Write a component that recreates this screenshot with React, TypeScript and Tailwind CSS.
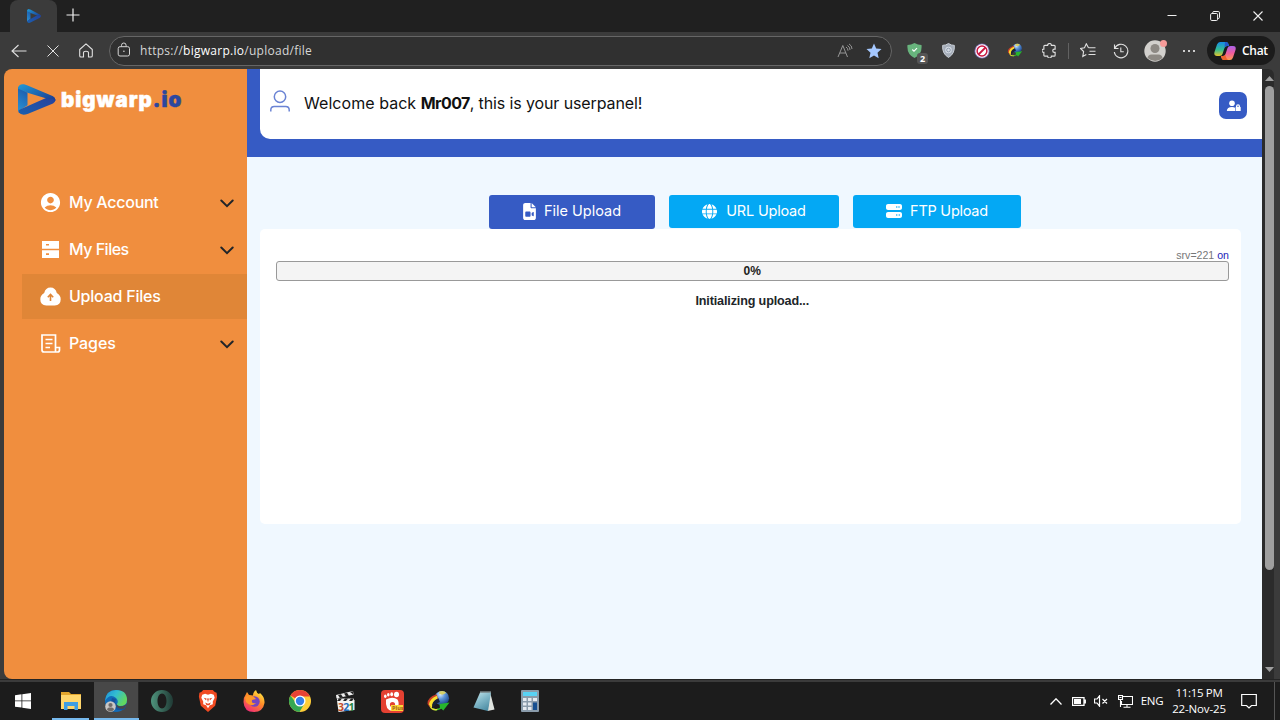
import type { ReactNode } from "react";
import { MdAccountCircle } from "react-icons/md";
import { FaFileVideo, FaGlobe, FaServer } from "react-icons/fa6";

function BrandMark({ className }: { className: string }) {
  return (
    <svg viewBox="0 0 38 32" preserveAspectRatio="none" className={className}>
      <defs>
        <linearGradient id="brandTop" x1="0" y1="0" x2="1" y2="0.7">
          <stop offset="0" stopColor="#1f9bd8" />
          <stop offset="1" stopColor="#1d4396" />
        </linearGradient>
        <linearGradient id="brandSide" x1="0" y1="1" x2="0.3" y2="0">
          <stop offset="0" stopColor="#2a93d4" />
          <stop offset="1" stopColor="#1c5fb0" />
        </linearGradient>
        <linearGradient id="brandBase" x1="0" y1="1" x2="1" y2="0">
          <stop offset="0" stopColor="#1a5fae" />
          <stop offset="1" stopColor="#26419c" />
        </linearGradient>
      </defs>
      <path d="M0 3 9.500 9v13L0 28.500z" fill="url(#brandSide)" />
      <path d="M.8 29.500Q-.3 27.500 2 26.300L28 14.500l7-1.500q5 3.500 0 7L9.500 31Q3.500 33 .8 29.500z" fill="url(#brandBase)" />
      <path d="M0 4Q1-.5 6 .3L9 1.200 34.500 12.300q4 2.500 2.500 5.500-2-3.500-6-2L9.500 9 .3 5z" fill="url(#brandTop)" />
    </svg>
  );
}

function IdmGlobe({ className }: { className: string }) {
  return (
    <svg viewBox="0 0 24 24" className={className}>
      <defs>
        <radialGradient id="globeBlue" cx="0.4" cy="0.25" r="0.8">
          <stop offset="0" stopColor="#d5e8fa" />
          <stop offset="0.4" stopColor="#5b93d6" />
          <stop offset="1" stopColor="#123a7e" />
        </radialGradient>
      </defs>
      <circle cx="15.500" cy="8.500" r="7.500" fill="url(#globeBlue)" />
      <path d="M13 1.500q5-1.500 7 1.500l-4 2-3.500-1z" fill="#d6d067" />
      <path d="M10 4.500Q0 8 .5 14.500L4.500 20q-.5-8 7-11z" fill="#cc4028" />
      <path d="M10.500 6Q3 9 2 15l3 4.500q0-7 6-10z" fill="#f9e02d" />
      <path d="M12 8.500q-6 2-6.500 7l1 4q1-5 7-7z" fill="#17233a" />
      <path d="M2.500 17q4.500 5 11 1.500l-.5-4 10.500-1.500-6.500 8.500-2-2Q7 24 2.500 17z" fill="#27b52c" />
      <path d="M2.500 17q4 4 9 2.500l-1.500 1.800Q5 22 2.500 17z" fill="#e1df38" />
    </svg>
  );
}

const line = "fill-none stroke-current";

function Cell({ className, children }: { className: string; children?: ReactNode }) {
  return <div className={`flex h-full shrink-0 items-center justify-center ${className}`}>{children}</div>;
}

function TabStrip() {
  return (
    <div className="flex h-8 shrink-0 items-stretch bg-[#202020] text-[#f0f0f0]">
      <div className="ml-[10px] flex w-[47px] items-center justify-center rounded-t-lg bg-[#3b3b3b]">
        <BrandMark className="mt-[-1px] h-[14px] w-[14px]" />
      </div>
      <Cell className="w-[32px]">
        <svg viewBox="0 0 14 14" className={`mb-[3px] h-[14px] w-[14px] ${line}`}>
          <path d="M7 .5v13M.5 7h13" strokeWidth="1.200" />
        </svg>
      </Cell>
      <div className="flex-1" />
      <Cell className="w-[43px]">
        <svg viewBox="0 0 10 10" className={`h-[10px] w-[10px] ${line}`}><path d="M.5 4.500h9" /></svg>
      </Cell>
      <Cell className="w-[43px]">
        <svg viewBox="0 0 10 10" className={`h-[10px] w-[10px] ${line}`}>
          <rect x=".6" y="2.500" width="7" height="7" rx="1.200" />
          <path d="M2.700 2.500V1.700q0-1.200 1.200-1.200h4.300q1.300 0 1.300 1.300v4.500q0 1.200-1.300 1.200h-.6" />
        </svg>
      </Cell>
      <Cell className="w-[43px]">
        <svg viewBox="0 0 10 10" className={`h-[10px] w-[10px] ${line}`}><path d="m.5.5 9 9m0-9-9 9" strokeWidth="1.100" /></svg>
      </Cell>
      <div className="w-px" />
    </div>
  );
}

function AddressBar() {
  return (
    <div className="flex h-[30px] w-[783px] shrink-0 items-center rounded-full border border-[#666] bg-[#303030] text-[#d6d6d6]">
      <svg viewBox="0 0 14 16" className={`mb-[2px] ml-[7px] h-4 w-[14px] ${line}`}>
        <rect x="1.200" y="4.700" width="11.300" height="9.300" rx="1.800" />
        <path d="M4.500 4.500V3.300q0-2.300 2.300-2.300t2.300 2.300v1.200" />
        <circle cx="6.900" cy="9.300" r=".8" className="fill-current stroke-none" />
      </svg>
      <div className="ml-[9px] pt-px text-[12px] leading-4 tracking-[0.27px] whitespace-nowrap">
        https://<span className="text-white">bigwarp.io</span>/upload/file
      </div>
      <div className="flex-1" />
      <svg viewBox="0 0 16 16" className={`mr-[13px] h-4 w-4 text-[#9b9b9b] ${line}`}>
        <path d="M1 14 5.800 2.500 10.500 14M2.800 10h6M9 4q2 1 2 3.700M10.500 2.500q2.500 1.300 2.500 4.500M12 .9q3 1.700 3 5.100" strokeWidth=".95" />
      </svg>
      <svg viewBox="0 0 16 16" className="mr-[9px] h-4 w-4 fill-[#a5c8ff]">
        <path d="m8 .5 2.200 5 5.300.6-4 3.600 1.200 5.500L8 12.400l-4.700 2.800 1.200-5.500-4-3.600 5.300-.6z" />
      </svg>
    </div>
  );
}

function Toolbar() {
  return (
    <div className="flex h-[37px] shrink-0 items-center bg-[#3b3b3b] text-[#e0e0e0]">
      <Cell className="w-9 pl-px">
        <svg viewBox="0 0 16 14" className={`h-[14px] w-4 ${line}`}><path d="M15.500 7H1M7.500 1 1 7l6.500 6" strokeWidth="1.100" /></svg>
      </Cell>
      <Cell className="w-[33px]">
        <svg viewBox="0 0 12 12" className={`h-3 w-3 ${line}`}><path d="m.5.5 11 11m0-11-11 11" /></svg>
      </Cell>
      <Cell className="w-[35px] pr-px">
        <svg viewBox="0 0 14 15" className={`h-[15px] w-[14px] ${line}`}>
          <path d="M.7 6.500 7 .8l6.300 5.700v6.200q0 1.300-1.300 1.300H9.500V9.800Q9.500 8.300 7 8.300T4.500 9.800V14H2Q.7 14 .7 12.700z" strokeWidth="1.100" strokeLinejoin="round" />
        </svg>
      </Cell>
      <div className="w-[5px] shrink-0" />
      <AddressBar />
      <Cell className="relative ml-[6px] w-[34px]">
        <svg viewBox="0 0 15 15" className="mr-0.5 h-[15px] w-[15px]">
          <path d="M7.500 0q3.500 2 7 2 1 9-7 13Q-.5 11 .5 2q3.500 0 7-2z" fill="#68b47d" />
          <path d="m5.300 6.500 1.700 1.700L10 5.200" fill="none" stroke="#fff" strokeWidth="1.200" />
        </svg>
        <span className="absolute top-[21px] left-[19px] flex h-[11px] w-[11px] items-center justify-center rounded-[3px] bg-[#555] text-[9px] font-bold text-white">2</span>
      </Cell>
      <Cell className="w-[33px]">
        <svg viewBox="0 0 14 16" className="h-[15px] w-[13px]">
          <path d="M7 .5q3 2 6.300 2 .7 9-6.300 13-7-4-6.300-13Q4 2.500 7 .5z" fill="#a5adb9" stroke="#d0d6de" />
          <circle cx="7" cy="7.500" r="3.500" fill="#d5dbe4" />
          <circle cx="7" cy="7.500" r="2" fill="none" stroke="#7d8b9e" strokeWidth=".8" />
        </svg>
      </Cell>
      <Cell className="w-[33px]">
        <svg viewBox="0 0 16 16" className="h-4 w-4">
          <circle cx="8" cy="8" r="7.600" fill="#7a69ae" />
          <circle cx="8" cy="8" r="6.700" fill="#fff" />
          <circle cx="8" cy="8" r="4.900" fill="none" stroke="#c91743" strokeWidth="1.500" />
          <path d="m4.500 11.500 7-7" stroke="#c91743" strokeWidth="1.800" />
        </svg>
      </Cell>
      <Cell className="w-[34px]"><IdmGlobe className="h-[15px] w-4" /></Cell>
      <Cell className="w-[34px]">
        <svg viewBox="0 0 16 16" className={`h-[15px] w-[15px] ${line}`}>
          <path d="M3 2.500h3a2 2 0 0 1 4 0h3q1 0 1 1V6.500h-.8a1.700 1.700 0 0 0 0 3.500h.8v3q0 1-1 1H10a2 2 0 0 1-4 0H3q-1 0-1-1v-3h-.3a1.700 1.700 0 0 1 0-3.500H2v-3q0-1 1-1z" strokeWidth="1.200" />
        </svg>
      </Cell>
      <div className="ml-[2px] h-4 w-px bg-[#626262]" />
      <Cell className="w-[38px]">
        <svg viewBox="0 0 16 15" className={`h-[15px] w-4 ${line}`}>
          <path d="M8.500 4.800 6.300.8 4.500 4.800.6 5.500l3 3-.8 4.900 3.500-2M8.500 4.800H15.500M9.500 8.200h6M8.500 11.500h7" strokeWidth="1.100" />
        </svg>
      </Cell>
      <Cell className="w-7">
        <svg viewBox="0 0 16 16" className={`h-4 w-4 ${line}`}>
          <path d="M1.500 1.500V5.500h4M1.800 5.300A6.800 6.800 0 1 1 1.300 9M7.800 4.500v4.300h3" strokeWidth="1.100" />
        </svg>
      </Cell>
      <Cell className="relative w-10">
        <svg viewBox="0 0 22 22" className="h-[22px] w-[22px]">
          <circle cx="11" cy="11" r="10.700" fill="#d2d0cd" />
          <circle cx="11" cy="8.500" r="4.500" fill="#8d8984" />
          <path d="M3.500 18q.5-3.500 4-3.500h7q3.500 0 4 3.500-7 6-15 0z" fill="#8d8984" />
        </svg>
        <span className="absolute top-[8px] left-[25px] h-[7px] w-[7px] rounded-full bg-[#f69b99]" />
      </Cell>
      <Cell className="w-[27px] gap-[3px]">
        <span className="h-0.5 w-0.5 rounded-full bg-white" />
        <span className="h-0.5 w-0.5 rounded-full bg-white" />
        <span className="h-0.5 w-0.5 rounded-full bg-white" />
      </Cell>
      <div className="ml-[5px] flex h-[29px] w-[68px] shrink-0 items-center rounded-full bg-[#1b1b1b] pl-[7px] text-[12px] font-semibold tracking-[-0.3px] text-white">
        <svg viewBox="0 0 22 20" className="mr-[6px] h-5 w-[22px] shrink-0">
          <defs>
            <linearGradient id="pilotLeft" x1="0" y1="0" x2="0" y2="1">
              <stop offset="0" stopColor="#168ce8" /><stop offset=".55" stopColor="#32bd91" /><stop offset="1" stopColor="#e5c42c" />
            </linearGradient>
            <linearGradient id="pilotRight" x1="0" y1="0" x2="0" y2="1">
              <stop offset="0" stopColor="#aa62ea" /><stop offset=".5" stopColor="#ef5c9f" /><stop offset="1" stopColor="#ff9a51" />
            </linearGradient>
          </defs>
          <path d="M6 1h6q2 0 2.500 2l.5 2h-2q-2 0-2.700 2.500L8.500 13Q8 15 5.500 15H3q-3.500 0-2.500-4L3 3.500Q4 1 6 1z" fill="url(#pilotLeft)" />
          <path d="M16 19h-6q-2 0-2.500-2L7 15h2q2 0 2.700-2.500L13.500 7Q14 5 16.500 5H19q3.500 0 2.500 4L19 16.500Q18 19 16 19z" fill="url(#pilotRight)" />
          <path d="M11 1q3 0 3.500 2l.5 2h-2q-1.700 0-2.500 2z" fill="#2458ce" />
          <path d="M7 15h2q1.500 0 2.200-1.500l.8 2.500q.5 2 2 3h-4q-2 0-2.500-2z" fill="#ef632e" />
        </svg>
        Chat
      </div>
    </div>
  );
}

function FilesIcon() {
  return (
    <svg viewBox="0 0 17 17" className="h-[17px] w-[17px]">
      <path fillRule="evenodd" fill="#fff" d="M0 0h17v7.700H0zM4 3v1.600h3V3zM0 9.300h17V17H0zm4 3v1.600h3v-1.600z" />
    </svg>
  );
}

function UploadIcon() {
  return (
    <svg viewBox="0 0 21 19" className="h-[19px] w-[21px] shrink-0">
      <path d="M10.500.5Q15.500.5 16.800 6q3.900 2.200 3.900 6.300 0 6-6 6.200H6.300Q.3 18.300.3 12.300.3 8.200 4.200 6 5.500.5 10.500.5z" fill="#fff" />
      <path d="M10.500 14V8M7.800 10.200l2.700-2.700 2.700 2.700" fill="none" stroke="#e08637" strokeWidth="1.600" />
    </svg>
  );
}

function PagesIcon() {
  return (
    <svg viewBox="0 0 20 20" className="h-5 w-5 fill-none stroke-white">
      <path d="M1.500 1H14.500V18H3Q1 18 1 16V1zM14.500 13.500H18.500V16q0 2-2 2h-2M4.500 5.500H11.500M4.500 9.500H11.500M4.500 13.500H9" strokeWidth="1.700" />
    </svg>
  );
}

interface NavProps { icon: ReactNode; label: string; tracking: string; active?: boolean }

function NavItem({ icon, label, tracking, active }: NavProps) {
  return (
    <div className={`flex h-[45px] items-center pl-[18px] font-medium text-white ${active ? "bg-[#e08637]" : ""}`}>
      <span className="flex w-[21px] justify-center">{icon}</span>
      <span className={`ml-2 flex-1 pb-px text-[16px] leading-6 whitespace-nowrap ${tracking}`}>{label}</span>
      {!active && (
        <svg viewBox="0 0 14 9" className="mt-px mr-[13px] h-[9px] w-[14px] fill-none stroke-[#212529]">
          <path d="m1.300 1.500 5.700 5.600 5.700-5.600" strokeWidth="2" strokeLinecap="round" />
        </svg>
      )}
    </div>
  );
}

function Sidebar() {
  return (
    <aside className="flex w-[243px] shrink-0 flex-col bg-[#f08e3e] font-['Inter',sans-serif]">
      <div className="flex h-[111px] items-start pt-[15px] pl-[14px]">
        <BrandMark className="h-[31px] w-[38px]" />
        <div className="ml-[5px] pt-[4px] text-[20.500px] leading-6 font-black tracking-[1px] text-white [-webkit-text-stroke:0.5px_currentColor]">
          bigwarp<span className="text-[#2c479f]">.io</span>
        </div>
      </div>
      <nav className="flex flex-col gap-[2px] pl-[18px]">
        <NavItem icon={<MdAccountCircle className="h-[23px] w-[23px] shrink-0" />} label="My Account" tracking="tracking-[-0.27px]" />
        <NavItem icon={<FilesIcon />} label="My Files" tracking="tracking-[-0.5px]" />
        <NavItem icon={<UploadIcon />} label="Upload Files" tracking="tracking-[-0.23px]" active />
        <NavItem icon={<PagesIcon />} label="Pages" tracking="tracking-[-0.1px]" />
      </nav>
    </aside>
  );
}

function MainPanel() {
  return (
    <main className="flex w-[1015px] shrink-0 flex-col bg-[#f0f8ff] font-['Inter',sans-serif]">
      <header className="h-[87.500px] shrink-0 bg-[#365bc4] pl-[13px]">
        <div className="flex h-[70px] items-center rounded-bl-[10px] bg-white pl-[10px]">
          <svg viewBox="0 0 20 22" className="mb-[6px] h-[22px] w-5 fill-none stroke-[#6a83d4]">
            <circle cx="10" cy="6.800" r="5.700" strokeWidth="1.500" />
            <path d="M.8 21.500v-1.500q0-3.500 3.500-3.500h11.400q3.500 0 3.500 3.500v1.500" strokeWidth="1.500" />
          </svg>
          <p className="ml-[14px] pb-[2px] text-[16px] leading-6 whitespace-nowrap text-[#111]">
            <span className="tracking-[0.05px]">Welcome back </span>
            <b className="font-bold tracking-[-0.6px]">Mr007</b>
            <span className="tracking-[-0.12px]">, this is your userpanel!</span>
          </p>
          <button className="mt-[3px] mr-[15px] ml-auto flex h-[27px] w-[28px] items-center justify-center rounded-[7px] bg-[#365bc4]">
            <svg viewBox="0 0 15 12" className="h-3 w-[15px]">
              <circle cx="6" cy="3.200" r="2.800" fill="#fff" />
              <path d="M.8 11Q1 7 6 7q2 0 3 .7V11zM10 6.800v-.5q0-2 2-2t2 2v.5q.7 0 .7.700V11H9.600V7.500q0-.7.4-.7zm1.200 0h1.600v-.5q0-.8-.8-.8t-.8.8z" fill="#fff" />
            </svg>
          </button>
        </div>
      </header>
      <div className="mt-[38px] flex h-[34.500px] shrink-0 items-start pl-[242px] text-[14.500px] text-white">
        <button className="flex h-[34px] w-[166px] items-center justify-center rounded-[3px] bg-[#365bc4] pb-0.5 whitespace-nowrap">
          <FaFileVideo className="mt-[2px] mr-2 h-[17px] w-[13px]" />
          File Upload
        </button>
        <button className="ml-[14px] flex h-[33px] w-[170px] items-center justify-center rounded-[3px] bg-[#04a8f4] pb-px tracking-[-0.2px] whitespace-nowrap">
          <FaGlobe className="mt-px mr-[9px] h-[15px] w-[15px]" />
          URL Upload
        </button>
        <button className="ml-[14px] flex h-[33px] w-[168px] items-center justify-center rounded-[3px] bg-[#04a8f4] pb-px tracking-[-0.25px] whitespace-nowrap">
          <FaServer className="mt-px mr-2 h-[16px] w-[16px]" />
          FTP Upload
        </button>
      </div>
      <section className="ml-[12.500px] h-[295px] w-[981px] rounded-[5px] bg-white pt-[20px] pr-[11.500px] pl-4 font-['Liberation_Sans',sans-serif]">
        <p className="text-right text-[10.600px] leading-3 text-[#777]">
          srv=221 <span className="text-[#2323b8]">on</span>
        </p>
        <div className="flex h-5 items-center justify-center rounded-[3px] border border-[#999] bg-[#f4f4f4] text-[12px] font-bold text-[#222]">0%</div>
        <p className="pt-[12px] text-center text-[12.600px] leading-4 font-bold tracking-[-0.15px] text-[#212529]">Initializing upload...</p>
      </section>
    </main>
  );
}

function Scrollbar() {
  return (
    <div className="flex w-3 shrink-0 flex-col items-center rounded-tr-md bg-[#2b2b2b] pl-[2px]">
      <svg viewBox="0 0 9 5" className="mt-[7px] h-[5px] w-[9px] fill-[#9f9f9f]"><path d="M4.500 0 9 5H0z" /></svg>
      <div className="mt-[5px] h-[484px] w-[9px] rounded-full bg-[#9f9f9f]" />
      <div className="flex-1" />
      <svg viewBox="0 0 9 5" className="mb-[7px] h-[5px] w-[9px] fill-[#9f9f9f]"><path d="M4.500 5 0 0h9z" /></svg>
    </div>
  );
}

function TaskbarApps() {
  return (
    <>
      <Cell className="w-[45px]">
        <svg viewBox="0 0 16 16" className="h-4 w-4 fill-white"><path d="M0 2.200 6.500 1.300v6.200H0zM7.300 1.200 16 0v7.500H7.300zM0 8.300h6.500v6.300L0 13.700zM7.300 8.300H16V16l-8.700-1.200z" /></svg>
      </Cell>
      <Cell className="relative w-[49px] pl-[2px]">
        <svg viewBox="0 0 22 20" className="h-5 w-[22px]">
          <path d="M1 1h8l2 2h10v14H1z" fill="#e3a62d" /><path d="M1 4h20v14H1z" fill="#ffd66c" />
          <path d="M4 19V11h14v8h-3.500v-4h-7v4z" fill="#3e9de2" />
        </svg>
        <span className="absolute bottom-0 left-[7px] h-0.5 w-[37px] bg-[#76b9ed]" />
      </Cell>
      <Cell className="relative w-[45px] border-r border-[#262626] bg-[#484848]">
        <svg viewBox="0 0 24 24" className="h-6 w-6">
          <defs><linearGradient id="edgeTop" x1="0" y1="0" x2="1" y2=".5"><stop offset="0" stopColor="#1c8edb" /><stop offset=".5" stopColor="#33bed0" /><stop offset="1" stopColor="#62d95e" /></linearGradient></defs>
          <circle cx="12" cy="12" r="11" fill="#126bb8" />
          <path d="M1 12Q2 1 12 1q11 0 11 10 0 6-7 6-3 0-3-2 2-3-1-6Q6 4 1 12z" fill="url(#edgeTop)" />
          <path d="M8 9q-4 13 11 12 2-1 3-3-5 2-9-1-3-3-1-7z" fill="#15529b" />
          <path d="M13 14q-1 2 2 3 5 1 8-3-1 4-4 6-9-1-6-6z" fill="#484848" />
          <circle cx="6.500" cy="17.500" r="5.300" fill="#c9c7c5" /><circle cx="6.500" cy="16" r="2.100" fill="#706b69" /><path d="M3 21q0-2.500 2-2.500h3q2 0 2 2.500-3.500 2.500-7 0z" fill="#706b69" />
        </svg>
        <span className="absolute bottom-0 left-0 h-0.5 w-[45px] bg-[#76b9ed]" />
      </Cell>
      <Cell className="w-[46px]">
        <svg viewBox="0 0 22 22" className="h-[22px] w-[22px]">
          <defs><linearGradient id="operaRing"><stop offset="0" stopColor="#4f947d" /><stop offset="1" stopColor="#203a35" /></linearGradient></defs>
          <path fillRule="evenodd" fill="url(#operaRing)" d="M11 0a11 11 0 1 0 0 22 11 11 0 0 0 0-22zm0 3.500c2.500 0 4.500 3 4.500 7.500s-2 7.500-4.500 7.500S6.500 15.500 6.500 11 8.500 3.500 11 3.500z" />
        </svg>
      </Cell>
      <Cell className="w-[46px]">
        <svg viewBox="0 0 20 23" className="h-[22px] w-5">
          <path d="M5 0h10l2 2 2 1 .5 4-2 9.500L10 23l-7.500-6.500L.5 7 1 3l2-1z" fill="#f14a22" />
          <path d="m4 5 3-1 3 1 3-1 3 1 1 3-2 4v3l-3 1-2 3-2-3-3-1v-3L3 8z" fill="#fff" />
          <path d="m5.500 8 3 1-.5 2zM14.500 8l-3 1 .5 2zM9 9l1 4 1-4zM7 13l3 1.500 3-1.500-1.500 3h-3z" fill="#e84420" />
        </svg>
      </Cell>
      <Cell className="w-[46px]">
        <svg viewBox="0 0 22 22" className="h-[22px] w-[22px]">
          <defs><linearGradient id="foxFire" x1=".8" y1="0" x2=".2" y2="1"><stop offset="0" stopColor="#fff044" /><stop offset=".45" stopColor="#ff8a27" /><stop offset="1" stopColor="#f0267b" /></linearGradient></defs>
          <path d="m3 4 1-2 2 3 4 .5Q10 2 13 0q.5 3 3 4l1-1q5 4 4.500 10Q20 22 11 22 1 22 .5 12 .5 7 3 4z" fill="url(#foxFire)" />
          <circle cx="11.500" cy="11.500" r="5.200" fill="#7546bf" />
          <path d="M2 7q4-3 9 0l2 2-4 1q-1 4 4 3-5 5-10-1z" fill="#ff9728" />
        </svg>
      </Cell>
      <Cell className="w-[46px]">
        <svg viewBox="0 0 22 22" className="h-[22px] w-[22px]">
          <circle cx="11" cy="11" r="11" fill="#ffcd38" />
          <path d="M11 11 1.470 5.500A11 11 0 0 1 20.530 5.500L21 6.500H11z" fill="#e84335" />
          <path d="M1.470 5.500A11 11 0 0 0 10.500 22l5-8.500L7 13z" fill="#35a853" />
          <circle cx="11" cy="11" r="5.500" fill="#fff" /><circle cx="11" cy="11" r="4.200" fill="#357fe9" />
        </svg>
      </Cell>
      <Cell className="w-[46px]">
        <svg viewBox="0 0 22 22" className="h-[22px] w-[22px]">
          <path d="M2 10.500 19.500 10v10L3.500 22z" fill="#f5f5f2" />
          <path d="m1 5 17-4 .5 3.500-17 4zM2 8.500h17V11H2z" fill="#eee" />
          <path d="m3 5 3-.7 2 3-3 .7zm6-1.500 3-.7 2 3-3 .7zm6-1.500 3-.7v3zM4 8.500h3L5 11H2zm6 0h3L11 11H8zm6 0h3L17 11h-3z" fill="#222" />
          <text x="3" y="20.500" fontSize="10.500" fontWeight="bold" letterSpacing="-0.8" fontFamily="Open Sans, sans-serif"><tspan fill="#c34c28">3</tspan><tspan fill="#226ebb">2</tspan><tspan fill="#278442">1</tspan></text>
        </svg>
      </Cell>
      <Cell className="w-[46px]">
        <svg viewBox="0 0 23 23" className="h-[23px] w-[23px]">
          <rect width="23" height="23" rx="4" fill="#e44132" />
          <path fillRule="evenodd" d="M5 9.500q7-3.500 11.500 0 2 3 .5 8-2 3.500-6 3.500-7-1-6-11.500zm6.500 2.500a2.600 2.600 0 1 0 0 5.200 2.600 2.600 0 0 0 0-5.200z" fill="#fff" />
          <ellipse cx="4.300" cy="6.300" rx="1.300" ry="1.800" fill="#fff" /><ellipse cx="7.300" cy="4.800" rx="1.300" ry="1.800" fill="#fff" /><ellipse cx="10.700" cy="4.200" rx="1.400" ry="2" fill="#fff" /><ellipse cx="15.500" cy="4.500" rx="2.500" ry="2.800" fill="#fff" />
          <rect x="10" y="15" width="12" height="6" fill="#fbd736" />
          <text x="11" y="20" fontSize="5.500" fontWeight="bold" fill="#a66018" fontFamily="Open Sans, sans-serif">Plus</text>
        </svg>
      </Cell>
      <Cell className="w-[46px]"><IdmGlobe className="h-[23px] w-[23px]" /></Cell>
      <Cell className="w-[46px]">
        <svg viewBox="0 0 22 22" className="h-[22px] w-[22px]">
          <defs><linearGradient id="padPage" x1="0" y1="0" x2=".6" y2="1"><stop offset="0" stopColor="#c4e5eb" /><stop offset=".5" stopColor="#83b9c9" /><stop offset="1" stopColor="#4f8fa6" /></linearGradient></defs>
          <path d="m17 2 4.500 17.500-7 1.500z" fill="#dfe3df" />
          <path d="M7 2.500h11L15 21 .5 17.500z" fill="url(#padPage)" />
          <path d="M7.500 2h10.500" stroke="#a5b4b6" strokeDasharray="1 1" strokeWidth="2" />
        </svg>
      </Cell>
      <Cell className="w-[46px]">
        <svg viewBox="0 0 18 22" className="h-[22px] w-[18px]">
          <rect width="18" height="22" rx="1" fill="#8a9baa" /><rect x="2" y="2" width="14" height="4" fill="#58d2f5" />
          <path d="M2 8h3.500v3H2zm5 0h3.500v3H7zm5 0h4v3h-4zM2 12.500h3.500v3H2zm5 0h3.500v3H7zM2 17h3.500v3H2zm5 0h3.500v3H7z" fill="#e5eaf0" /><path d="M12 12.500h4V20h-4z" fill="#174f90" />
        </svg>
      </Cell>
    </>
  );
}

function Taskbar() {
  return (
    <footer className="flex h-[38px] shrink-0 bg-[#1c1c1c] text-white">
      <TaskbarApps />
      <div className="flex-1" />
      <Cell className="w-6"><svg viewBox="0 0 12 7" className={`h-[7px] w-3 ${line}`}><path d="m.5 6.500 5.500-5.700 5.500 5.700" strokeWidth="1.300" /></svg></Cell>
      <Cell className="w-[22px]">
        <svg viewBox="0 0 14 9" className={`h-[9px] w-[14px] ${line}`}><path d="M.5.5h11.500v8H.5zM13.300 2.500v4" strokeWidth="1.300" /><path d="M2 2h7v5H2z" className="fill-current stroke-none" /></svg>
      </Cell>
      <Cell className="w-[22px]">
        <svg viewBox="0 0 14 12" className={`h-3 w-[14px] ${line}`}><path d="M.5 4H3L5.500.8v10.400L3 8H.5zM8.500 4l4.500 4.500M13 4 8.500 8.500" strokeWidth="1.200" /></svg>
      </Cell>
      <Cell className="w-[26px]">
        <svg viewBox="0 0 15 13" className={`h-[13px] w-[15px] ${line}`}><path d="M5 1.500h9.500v8h-11V6M9 9.500V12M5.500 12.300h7M.5.500h4v4h-4zM2.500 4.500V12M1.500 2.500h2" strokeWidth="1.100" /></svg>
      </Cell>
      <Cell className="w-[28px] text-[11.500px] tracking-[-0.3px]">ENG</Cell>
      <Cell className="w-[66px] flex-col text-[11.500px] leading-[16.500px] tracking-[-0.15px] whitespace-nowrap">
        <span className="tracking-[-0.35px]">11:15 PM</span><span>22-Nov-25</span>
      </Cell>
      <Cell className="w-[34px]">
        <svg viewBox="0 0 16 16" className={`h-4 w-4 ${line}`}><path d="M.7 1.500h14.600v11H10.500L8 15l-2.500-2.500H.7z" strokeWidth="1.200" /></svg>
      </Cell>
      <div className="ml-[8px] w-px bg-[#555]" />
      <div className="w-[5px] shrink-0" />
    </footer>
  );
}

export default function App() {
  return (
    <div className="flex h-[720px] w-[1280px] flex-col overflow-hidden bg-[#3b3b3b] font-['Open_Sans',sans-serif]">
      <TabStrip />
      <Toolbar />
      <div className="flex h-[610px] shrink-0 pl-1">
        <div className="flex overflow-hidden rounded-l-lg">
          <Sidebar />
          <MainPanel />
        </div>
        <Scrollbar />
      </div>
      <div className="h-[3px] shrink-0 border-t border-[#242424] bg-[#3b3b3b]" />
      <Taskbar />
    </div>
  );
}
